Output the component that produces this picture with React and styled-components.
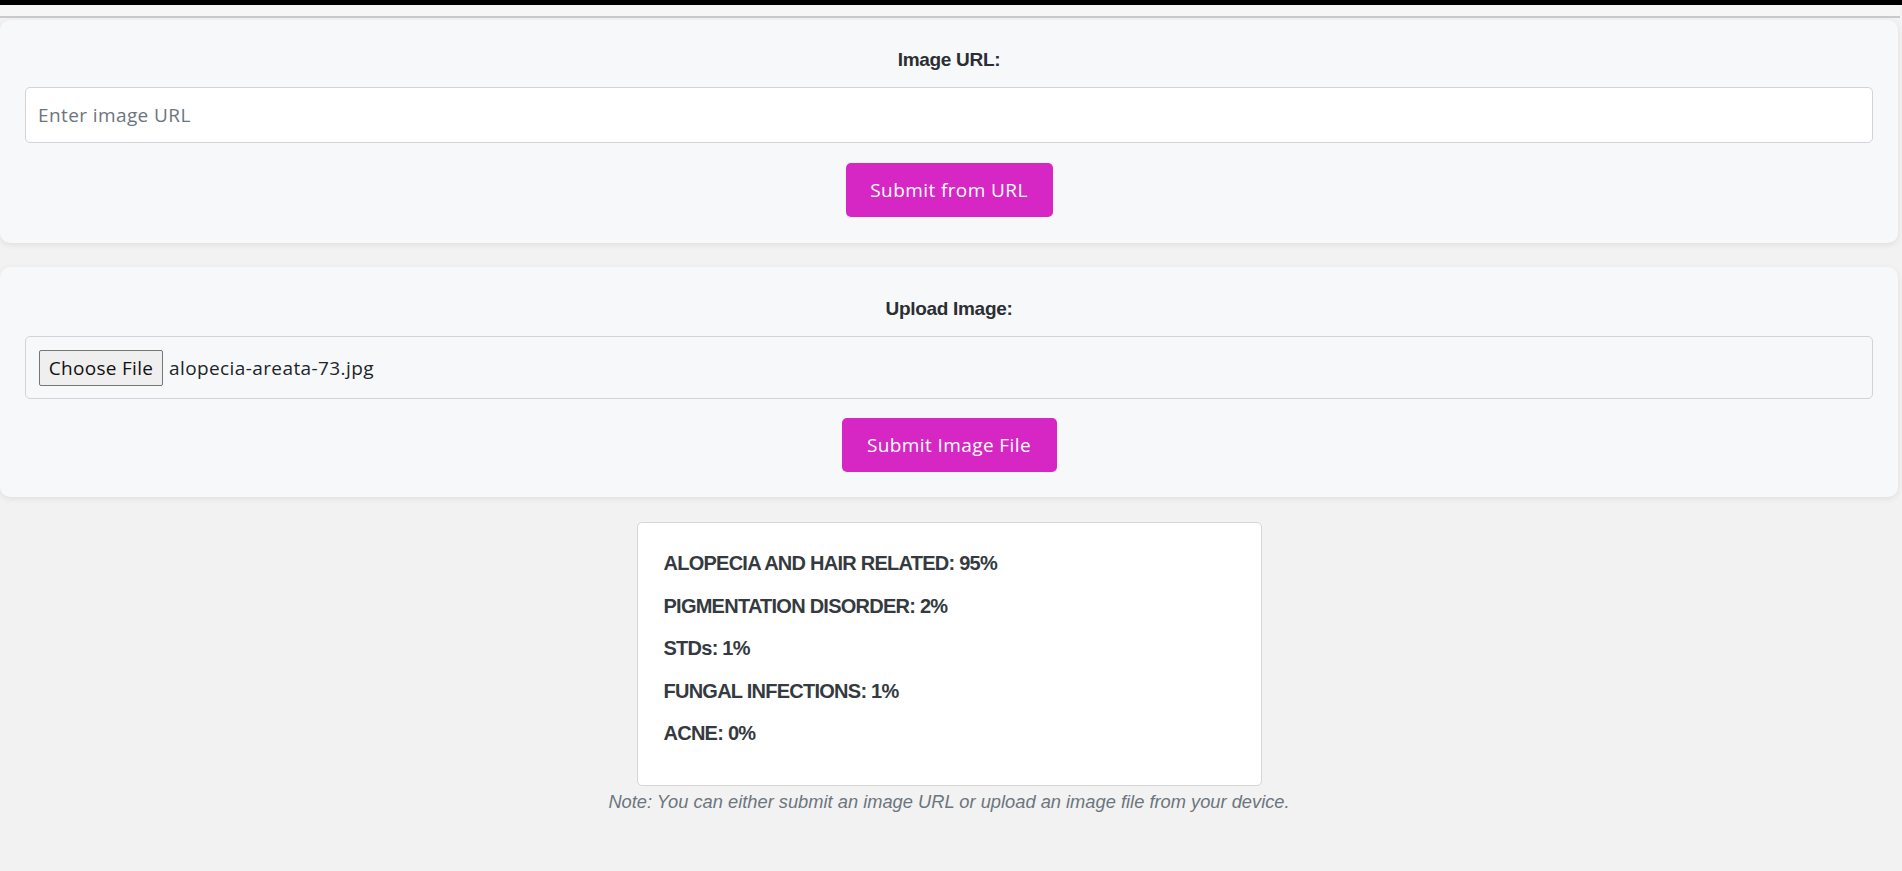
import styled, { createGlobalStyle } from "styled-components";

const GlobalStyle = createGlobalStyle`
  html, body {
    margin: 0;
    padding: 0;
    background: #f2f2f2;
  }
  * {
    box-sizing: border-box;
  }
`;

const Page = styled.div`
  min-height: 871px;
  background: #f2f2f2;
  border-top: 5px solid #000;
  padding-right: 4px;
`;

const TopBand = styled.div`
  height: 13px;
  background: #f6f6f7;
  border-bottom: 2px solid #c9c9c9;
  margin-right: -2px;
`;

const Card = styled.section`
  margin-top: ${(props) => props.$mt}px;
  background: #f7f8fa;
  border-radius: 10px;
  box-shadow: 0 2px 6px rgba(0, 0, 0, 0.08);
  padding: ${(props) => props.$pt}px 25px ${(props) => props.$pb}px;
  display: flex;
  flex-direction: column;
  align-items: center;
`;

const Label = styled.label`
  font-family: "Liberation Sans", Arial, sans-serif;
  font-weight: bold;
  font-size: 19px;
  line-height: 24px;
  letter-spacing: -0.3px;
  color: #2b2f33;
  margin-bottom: 15px;
`;

const UrlInput = styled.input`
  width: 100%;
  height: 56px;
  border: 1px solid #ced4da;
  border-radius: 5px;
  background: #fff;
  padding: 0 12px;
  font-family: "Open Sans", sans-serif;
  font-size: 19px;
  letter-spacing: 0.4px;
  color: #212529;
  outline: none;

  &::placeholder {
    color: #6c757d;
  }
`;

const FileBox = styled.div`
  width: 100%;
  height: 63px;
  border: 1px solid #ced4da;
  border-radius: 5px;
  background: #f7f8fa;
  padding: 0 13px;
  display: flex;
  align-items: center;
  gap: 6px;
`;

const ChooseButton = styled.button`
  width: 124px;
  height: 36px;
  padding: 0;
  background: #efefef;
  border: 1px solid #767676;
  border-radius: 2px;
  font-family: "Open Sans", sans-serif;
  font-size: 19px;
  letter-spacing: 0.3px;
  color: #111;
`;

const FileName = styled.span`
  font-family: "Open Sans", sans-serif;
  font-size: 19px;
  letter-spacing: 0.4px;
  color: #212529;
`;

const SubmitButton = styled.button`
  margin-top: ${(props) => props.$mt}px;
  width: ${(props) => props.$w}px;
  height: 54px;
  background: #d626c4;
  border: none;
  border-radius: 5px;
  color: #fff;
  font-family: "Open Sans", sans-serif;
  font-size: 19px;
  letter-spacing: 0.4px;
`;

const Results = styled.div`
  width: 625px;
  margin: 25px auto 0;
  background: #fff;
  border: 1px solid #d6d6d6;
  border-radius: 5px;
  padding: 28px 26px 40px;
  display: flex;
  flex-direction: column;
  gap: 18.5px;
`;

const ResultItem = styled.p`
  margin: 0;
  font-family: "Liberation Sans", Arial, sans-serif;
  font-weight: bold;
  font-size: 20px;
  line-height: 24px;
  color: #343a40;
  letter-spacing: -0.75px;
`;

const Note = styled.p`
  margin: 4px 0 0;
  text-align: center;
  font-family: "Liberation Sans", Arial, sans-serif;
  font-style: italic;
  font-size: 18.3px;
  line-height: 24px;
  color: #6c757d;
`;

const results = [
  ["ALOPECIA AND HAIR RELATED", 95],
  ["PIGMENTATION DISORDER", 2],
  ["STDs", 1],
  ["FUNGAL INFECTIONS", 1],
  ["ACNE", 0],
];

export default function App() {
  return (
    <>
      <GlobalStyle />
      <Page>
        <TopBand />
        <Card $mt={2} $pt={28} $pb={26}>
          <Label htmlFor="url">Image URL:</Label>
          <UrlInput id="url" placeholder="Enter image URL" />
          <SubmitButton $mt={20} $w={207}>
            Submit from URL
          </SubmitButton>
        </Card>
        <Card $mt={24} $pt={30} $pb={25}>
          <Label>Upload Image:</Label>
          <FileBox>
            <ChooseButton>Choose File</ChooseButton>
            <FileName>alopecia-areata-73.jpg</FileName>
          </FileBox>
          <SubmitButton $mt={19} $w={215}>
            Submit Image File
          </SubmitButton>
        </Card>
        <Results>
          {results.map(([name, pct]) => (
            <ResultItem key={name}>
              {name}: {pct}%
            </ResultItem>
          ))}
        </Results>
        <Note>
          Note: You can either submit an image URL or upload an image file from
          your device.
        </Note>
      </Page>
    </>
  );
}
